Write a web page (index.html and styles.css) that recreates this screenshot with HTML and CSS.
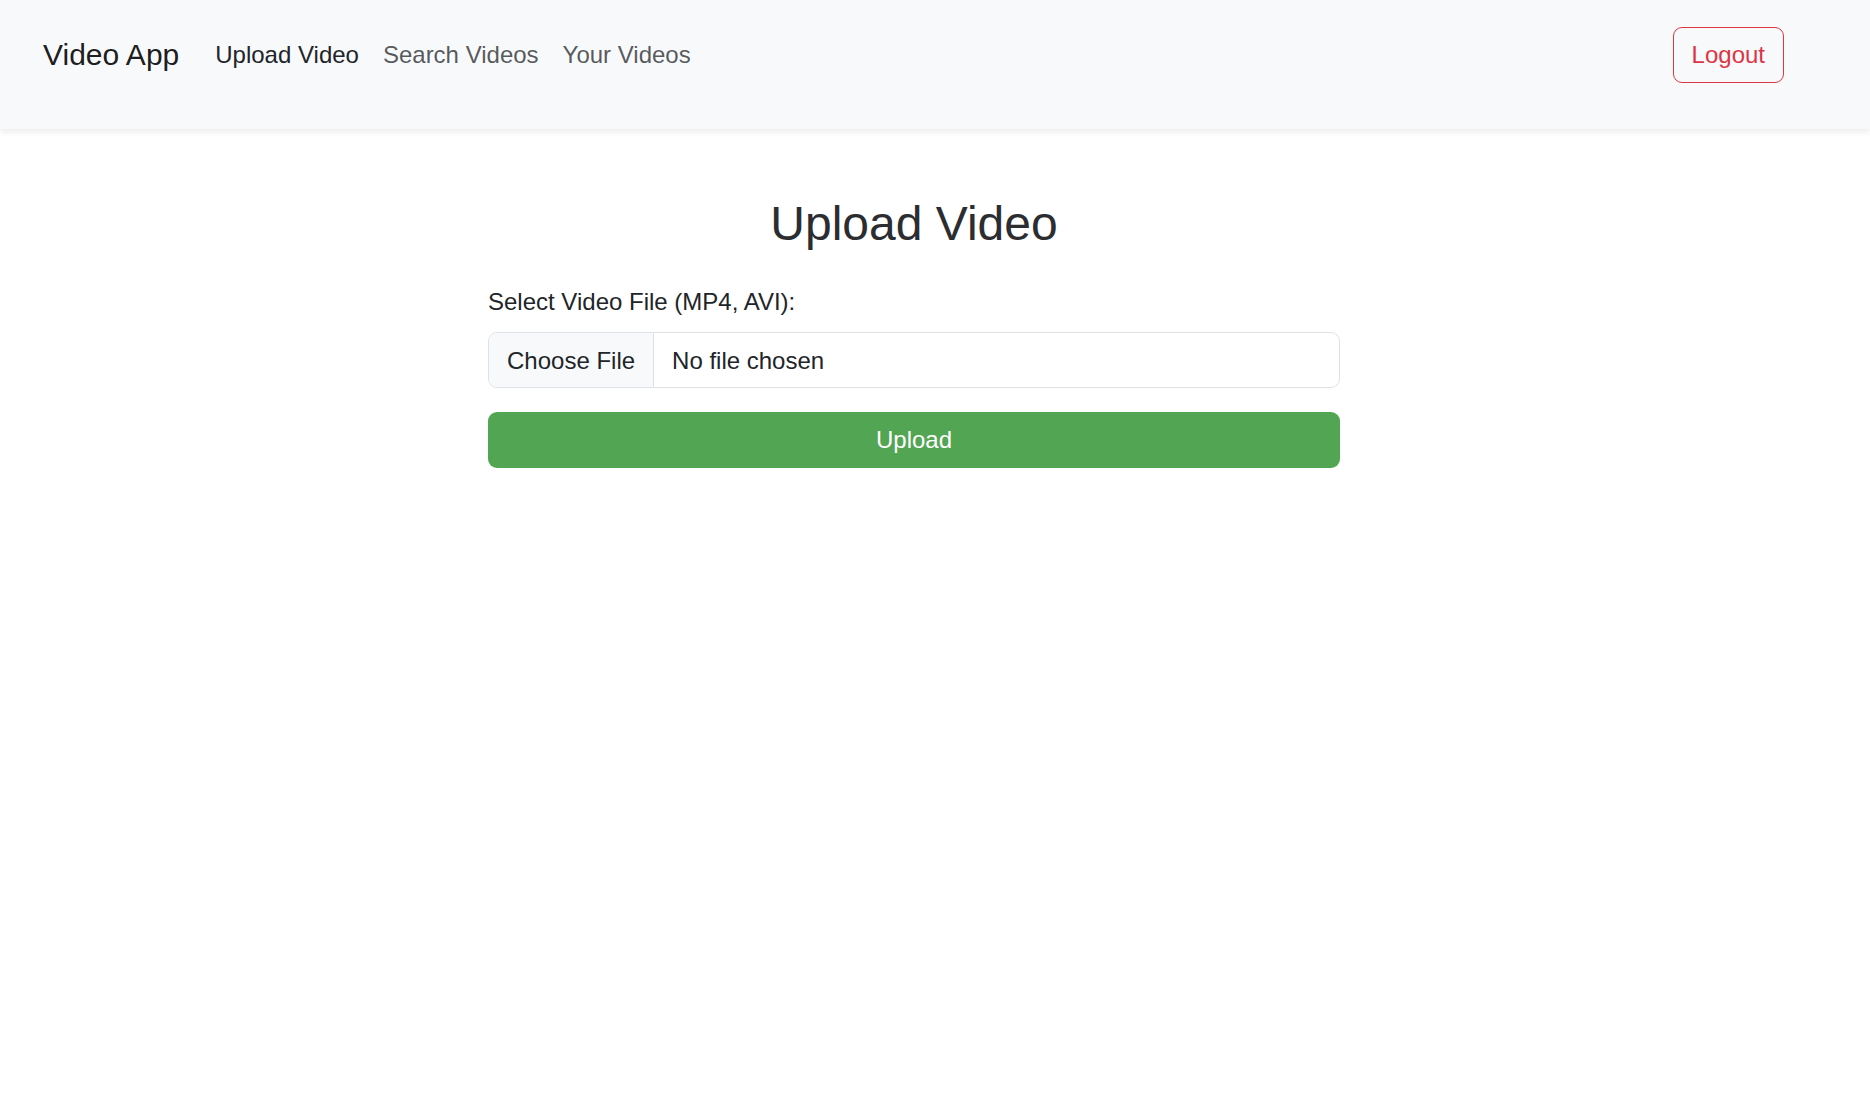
FILE: index.html
```html
<!DOCTYPE html>
<html lang="en">
<head>
<meta charset="utf-8">
<title>Upload Video - Video App</title>
<link rel="stylesheet" href="styles.css">
</head>
<body>
<nav class="navbar">
  <a class="brand" href="#">Video App</a>
  <ul class="nav-links">
    <li><a class="nav-link active" href="#">Upload Video</a></li>
    <li><a class="nav-link" href="#">Search Videos</a></li>
    <li><a class="nav-link" href="#">Your Videos</a></li>
  </ul>
  <button class="btn-logout" type="button">Logout</button>
</nav>
<main class="page">
  <div class="content">
    <h2 class="title">Upload Video</h2>
    <form class="upload-form">
      <label class="form-label" for="video">Select Video File (MP4, AVI):</label>
      <input class="file-input" type="file" id="video" accept=".mp4,.avi">
      <button class="btn-upload" type="submit">Upload</button>
    </form>
  </div>
</main>
</body>
</html>
```

FILE: styles.css
```css
* { box-sizing: border-box; }

html, body {
  margin: 0;
  padding: 0;
  background: #ffffff;
}

body {
  font-family: "Liberation Sans", Arial, sans-serif;
  font-size: 24px;
  line-height: 1.5;
  color: #212529;
}

.navbar {
  display: flex;
  align-items: center;
  height: 129px;
  padding: 0 86px 20px 43px;
  background: #f8f9fa;
  box-shadow: 0 3px 6px rgba(0, 0, 0, 0.075);
}

.brand {
  font-size: 30px;
  color: rgba(0, 0, 0, 0.9);
  text-decoration: none;
  margin-right: 24px;
  line-height: 45px;
}

.nav-links {
  display: flex;
  list-style: none;
  margin: 0;
  padding: 0;
}

.nav-link {
  display: block;
  padding: 12px 12px;
  color: rgba(33, 37, 41, 0.75);
  text-decoration: none;
}

.nav-link.active {
  color: #212529;
}

.btn-logout {
  margin-left: auto;
  font-family: inherit;
  font-size: 24px;
  line-height: 1.5;
  height: 56px;
  padding: 8px 18px;
  color: #dc3545;
  background: transparent;
  border: 1.5px solid #dc3545;
  border-radius: 9px;
}

.page {
  padding: 66px 42px 0 0;
}

.content {
  width: 852px;
  margin: 0 auto;
}

.title {
  margin: 0 0 31px;
  font-size: 48px;
  font-weight: 400;
  line-height: 1.2;
  text-align: center;
  color: #2b2d30;
}

.upload-form {
  display: flex;
  flex-direction: column;
}

.form-label {
  display: block;
  margin-bottom: 12px;
}

.file-input {
  display: block;
  width: 100%;
  height: 56px;
  padding: 9px 18px;
  font-family: inherit;
  font-size: 24px;
  line-height: 1.5;
  color: #212529;
  background: #ffffff;
  border: 1.5px solid #dee2e6;
  border-radius: 9px;
  overflow: hidden;
}

.file-input::file-selector-button {
  height: 56px;
  padding: 9px 18px;
  margin: -9px 18px -9px -18px;
  font-family: inherit;
  font-size: 24px;
  line-height: 1.5;
  color: #212529;
  background: #f8f9fa;
  border: 0;
  border-right: 1.5px solid #dee2e6;
  border-radius: 0;
}

.btn-upload {
  margin-top: 24px;
  width: 100%;
  height: 56px;
  font-family: inherit;
  font-size: 24px;
  line-height: 1.5;
  color: #ffffff;
  background: #52a552;
  border: 0;
  border-radius: 9px;
}
```
